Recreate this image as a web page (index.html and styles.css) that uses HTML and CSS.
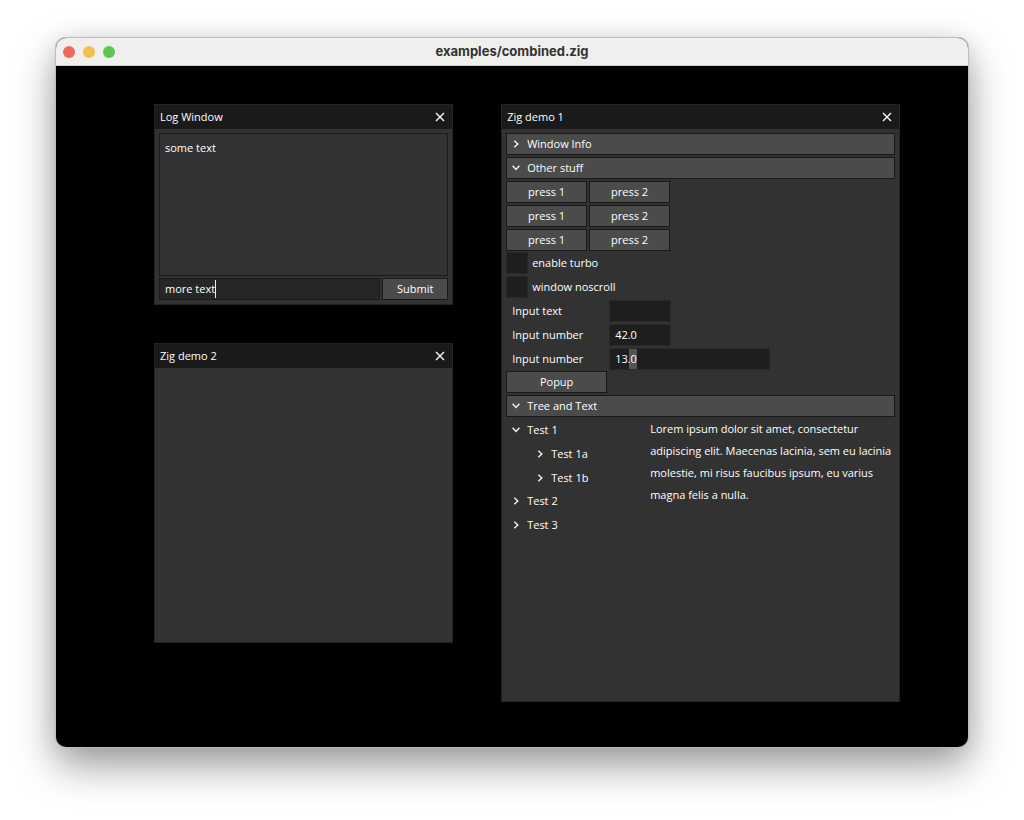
FILE: index.html
```html
<!DOCTYPE html>
<html lang="en">
<head>
<meta charset="utf-8">
<title>examples/combined.zig</title>
<link rel="stylesheet" href="styles.css">
</head>
<body>
<svg class="symbols" aria-hidden="true">
  <symbol id="close" viewBox="0 0 10 10"><path d="M1 1L9 9M9 1L1 9"/></symbol>
  <symbol id="right" viewBox="0 0 8 8"><path d="M2.3 0.8L5.8 4L2.3 7.2"/></symbol>
  <symbol id="down" viewBox="0 0 8 8"><path d="M0.6 1.8L4 5.4L7.4 1.8"/></symbol>
</svg>
<main class="app">
  <header class="app-bar">
    <div class="lights">
      <button class="light red" aria-label="Close"></button>
      <button class="light yellow" aria-label="Minimize"></button>
      <button class="light green" aria-label="Zoom"></button>
    </div>
    <h1 class="app-title">examples/combined.zig</h1>
  </header>
  <div class="canvas">
    <div class="column column-left">
      <section class="win">
        <header class="win-bar"><h2>Log Window</h2><button class="close" aria-label="Close Log Window"><svg><use href="#close"/></svg></button></header>
        <div class="win-body">
          <div class="log">some text</div>
          <form class="log-form">
            <div class="log-field">
              <input class="field field-active" type="text" value="more text" aria-label="Message">
              <span class="caret"></span>
            </div>
            <button class="btn" type="button">Submit</button>
          </form>
        </div>
      </section>
      <section class="win win-empty">
        <header class="win-bar"><h2>Zig demo 2</h2><button class="close" aria-label="Close Zig demo 2"><svg><use href="#close"/></svg></button></header>
      </section>
    </div>
    <div class="column column-right">
      <section class="win win-main">
        <header class="win-bar"><h2>Zig demo 1</h2><button class="close" aria-label="Close Zig demo 1"><svg><use href="#close"/></svg></button></header>
        <div class="win-body">
          <button class="fold" aria-expanded="false"><svg><use href="#right"/></svg>Window Info</button>
          <button class="fold" aria-expanded="true"><svg><use href="#down"/></svg>Other stuff</button>
          <div class="presses">
            <button class="btn">press 1</button><button class="btn">press 2</button>
            <button class="btn">press 1</button><button class="btn">press 2</button>
            <button class="btn">press 1</button><button class="btn">press 2</button>
          </div>
          <div class="group">
            <label class="check"><input type="checkbox">enable turbo</label>
            <label class="check"><input type="checkbox">window noscroll</label>
            <div class="entry"><label for="text">Input text</label><input class="field short" id="text" type="text"></div>
            <div class="entry"><label for="num1">Input number</label><input class="field short" id="num1" type="text" value="42.0"></div>
            <div class="entry"><label for="num2">Input number</label><span class="marked"><input class="field" id="num2" type="text" value="13.0"></span></div>
          </div>
          <div class="group">
            <button class="btn popup">Popup</button>
            <button class="fold" aria-expanded="true"><svg><use href="#down"/></svg>Tree and Text</button>
            <div class="split">
              <div class="tree">
                <button class="node" aria-expanded="true"><svg><use href="#down"/></svg>Test 1</button>
                <div class="branch">
                  <button class="node"><svg><use href="#right"/></svg>Test 1a</button>
                  <button class="node"><svg><use href="#right"/></svg>Test 1b</button>
                </div>
                <button class="node"><svg><use href="#right"/></svg>Test 2</button>
                <button class="node"><svg><use href="#right"/></svg>Test 3</button>
              </div>
              <p class="lorem">Lorem ipsum dolor sit amet, consectetur<br>adipiscing elit. Maecenas lacinia, sem eu lacinia<br>molestie, mi risus faucibus ipsum, eu varius<br>magna felis a nulla.</p>
            </div>
          </div>
        </div>
      </section>
    </div>
  </div>
</main>
</body>
</html>
```
FILE: styles.css
```css
* { box-sizing: border-box; }

body {
  margin: 0;
  padding: 38px 56px 73px 56px;
  background: #fff;
  color: #fff;
  font: 500 11px/22px "Open Sans", "Noto Sans", sans-serif;
}

button, input {
  margin: 0;
  padding: 0;
  border: 0;
  border-radius: 0;
  background: none;
  color: inherit;
  font: inherit;
}

h1, h2, p { margin: 0; font: inherit; }

.symbols { position: absolute; width: 0; height: 0; }

svg { fill: none; stroke: #eee; stroke-width: 1.5; }

.app {
  display: flex;
  flex-direction: column;
  min-height: calc(100vh - 111px);
  border-radius: 10px;
  overflow: hidden;
  background: #000;
  box-shadow: 0 0 1px 1px #bbb, 0 18px 40px rgba(0, 0, 0, 0.4), 0 0 24px rgba(0, 0, 0, 0.08);
}

.app-bar {
  display: grid;
  grid-template-columns: 1fr auto 1fr;
  align-items: center;
  height: 28px;
  padding: 0 7px;
  border-bottom: 1px solid #d2d2d0;
  background: #efefed;
}

.lights { display: flex; gap: 8px; }
.light { width: 12px; height: 12px; border-radius: 50%; }
.red { background: #ec6a5e; }
.yellow { background: #f4bf4f; }
.green { background: #5fc454; }

.app-title {
  color: #333;
  font: 700 13px/20px Inter, sans-serif;
  padding-bottom: 1px;
}

.canvas {
  display: flex;
  flex: 1;
  align-items: flex-start;
  gap: 48px;
  padding: 38px 68px 45px 98px;
}

.column { display: flex; flex-direction: column; gap: 38px; min-width: 0; }
.column-left { flex: 3 1 0; }
.column-right { flex: 4 1 0; }

.win { border: 1px solid #242424; background: #323232; }
.win-empty { min-height: 300px; }
.win-main { min-height: 598px; }

.win-bar {
  display: flex;
  justify-content: space-between;
  align-items: center;
  height: 24px;
  padding: 0 7px 0 5px;
  background: #1a1a1a;
}

.close { display: flex; }
.close svg { width: 10px; height: 10px; }

.win-body {
  display: flex;
  flex-direction: column;
  gap: 2px;
  padding: 4px;
}

.log {
  height: 143px;
  padding: 3px 5px;
  border: 1px solid #1b1b1b;
}

.log-form { display: grid; grid-template-columns: 1fr 66px; gap: 2px; }
.log-field { position: relative; }
.log-field .field { width: 100%; }

.caret {
  position: absolute;
  left: 56px;
  top: 2px;
  width: 1px;
  height: 18px;
  background: #eee;
}

.btn, .fold {
  height: 22px;
  border: 1px solid #191919;
  background: #4b4b4b;
  line-height: 20px;
}

.fold, .node {
  display: flex;
  align-items: center;
  gap: 7px;
  padding: 0 5px;
  text-align: left;
}

.fold svg, .node svg { width: 8px; height: 8px; }

.presses {
  display: grid;
  grid-template-columns: 81px 81px;
  gap: 2px;
}

.group { display: flex; flex-direction: column; gap: 2px; margin-top: -1px; }

.check { display: flex; gap: 4px; }
.check input {
  appearance: none;
  width: 22px;
  height: 22px;
  border: 1px solid #282828;
  background: #1e1e1e;
}
.check input:checked { background: #777; }

.entry { display: grid; grid-template-columns: 97px 1fr; padding-left: 6px; }

.field {
  height: 22px;
  width: 161px;
  padding: 0 5px;
  border: 1px solid #282828;
  background: #1e1e1e;
}
.short { width: 62px; }
.field-active { border-color: #1b1b1b; background: #262626; }

.marked { position: relative; display: flex; }
.marked::before {
  content: "";
  position: absolute;
  left: 20px;
  top: 1px;
  width: 8px;
  height: 20px;
  background: #8c8c8c;
}
.marked .field { position: relative; background: rgba(0, 0, 0, 0.4); }

.popup { width: 101px; }

.split { display: grid; grid-template-columns: 144px 1fr; }
.tree, .branch { display: flex; flex-direction: column; gap: 2px; }
.branch { padding-left: 24px; margin-bottom: -1px; }
.node { height: 22px; padding: 0 6px; }
.lorem { margin-top: -1px; white-space: nowrap; }
```
